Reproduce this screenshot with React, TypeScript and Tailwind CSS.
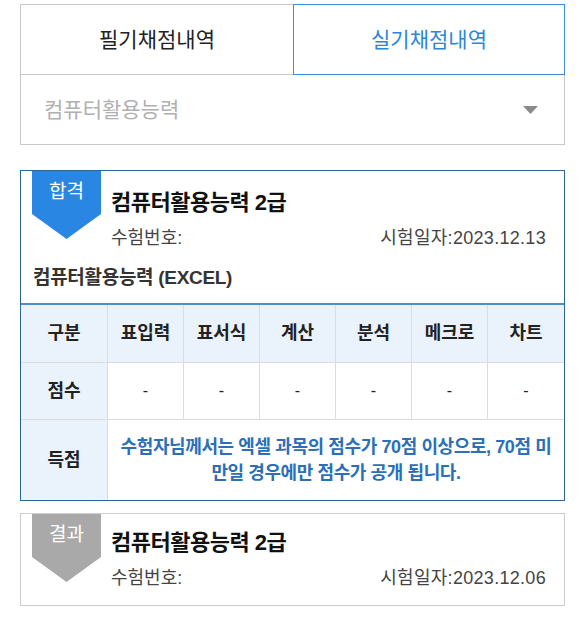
import React from "react";

const font = {
  fontFamily: '"Liberation Sans", "Noto Sans CJK KR", sans-serif',
};

function Badge({ label, color }: { label: string; color: string }) {
  return (
    <div className="absolute left-[11px] top-0 w-[69px] flex flex-col items-stretch">
      <div
        className={`h-[43px] flex items-center justify-center text-white text-[19px] pb-[1px] ${color}`}
      >
        {label}
      </div>
      <svg width="69" height="25" viewBox="0 0 69 25" className="block">
        <polygon
          points="0,0 69,0 34.5,25"
          fill={color === "bg-[#2a86e3]" ? "#2a86e3" : "#a9a9a9"}
        />
      </svg>
    </div>
  );
}

function CardHead({ date }: { date: string }) {
  return (
    <div className="pl-[90px] pr-[18px] pt-[18px]">
      <div className="text-[22px] leading-[28px] font-bold text-[#111] tracking-[-0.5px]">
        컴퓨터활용능력 2급
      </div>
      <div className="mt-[9px] flex justify-between text-[18px] leading-[24px] text-[#444]">
        <span>수험번호:</span>
        <span className="tracking-[0.3px]">시험일자:{date}</span>
      </div>
    </div>
  );
}

export default function App() {
  const cols = ["표입력", "표서식", "계산", "분석", "메크로", "차트"];
  return (
    <div className="w-[585px] h-[621px] bg-white px-[20px] pt-[4px]" style={font}>
      {/* tabs */}
      <div className="flex h-[71px]">
        <div className="flex-1 flex items-center justify-center border-t border-l border-b border-[#c8c8c8] text-[21px] text-[#222]">
          필기채점내역
        </div>
        <div className="w-[272px] flex items-center justify-center border border-[#3a8edb] text-[21px] text-[#2a86d8]">
          실기채점내역
        </div>
      </div>
      {/* select */}
      <div className="h-[70px] flex items-center justify-between border-l border-r border-b border-[#c8c8c8] pl-[23px] pr-[26px]">
        <span className="text-[21px] text-[#b0b0b0]">컴퓨터활용능력</span>
        <svg width="15" height="8" viewBox="0 0 15 8">
          <polygon points="0,0 15,0 7.5,8" fill="#8a8a8a" />
        </svg>
      </div>

      {/* card 1 */}
      <div className="relative mt-[25px] border border-[#2c6699]">
        <Badge label="합격" color="bg-[#2a86e3]" />
        <CardHead date="2023.12.13" />
        <div className="px-[12px] mt-[16px] mb-[13px] text-[19px] leading-[24px] font-bold text-[#333] tracking-[-0.3px]">
          컴퓨터활용능력 (EXCEL)
        </div>
        <div className="border-t-2 border-[#4a8fd0] grid grid-cols-[87px_repeat(6,1fr)] text-[18px] text-[#222]">
          <div className="h-[58px] flex items-center justify-center bg-[#eaf2fb] border-r border-b border-[#dcdcdc] font-bold">
            구분
          </div>
          {cols.map((c, i) => (
            <div
              key={c}
              className={`h-[58px] flex items-center justify-center bg-[#eaf2fb] border-b border-[#dcdcdc] font-bold ${
                i < 5 ? "border-r" : ""
              }`}
            >
              {c}
            </div>
          ))}
          <div className="h-[57px] flex items-center justify-center bg-[#eaf2fb] border-r border-b border-[#dcdcdc] font-bold">
            점수
          </div>
          {cols.map((c, i) => (
            <div
              key={c}
              className={`h-[57px] flex items-center justify-center border-b border-[#dcdcdc] text-[16px] ${
                i < 5 ? "border-r" : ""
              }`}
            >
              -
            </div>
          ))}
          <div className="h-[80px] flex items-center justify-center bg-[#eaf2fb] border-r border-[#dcdcdc] font-bold">
            득점
          </div>
          <div className="col-span-6 h-[80px] flex items-center justify-center text-center text-[18px] leading-[26px] text-[#2a6fb8] font-semibold px-[2px] tracking-[-0.4px]">
            <p>
              수험자님께서는 엑셀 과목의 점수가 <b>70</b>점 이상으로, <b>70</b>점 미
              <br />
              만일 경우에만 점수가 공개 됩니다.
            </p>
          </div>
        </div>
      </div>

      {/* card 2 */}
      <div className="relative mt-[12px] h-[93px] border border-[#cccccc]">
        <Badge label="결과" color="bg-[#a9a9a9]" />
        <div className="-mt-[3px]">
          <CardHead date="2023.12.06" />
        </div>
      </div>
    </div>
  );
}
